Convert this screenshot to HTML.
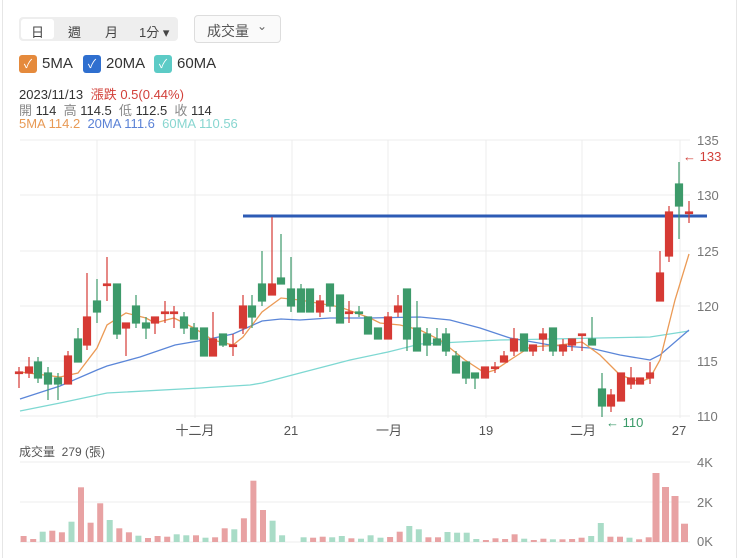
<!DOCTYPE html>
<html><head><meta charset="utf-8"><style>
html,body{margin:0;padding:0;background:#fff;width:740px;height:558px;overflow:hidden;font-family:"Liberation Sans","Noto Sans CJK TC",sans-serif;}
.abs{position:absolute;}
.seg{left:19px;top:17px;width:159px;height:24px;background:#eeeeee;border-radius:4px;}
.seg span{position:absolute;top:5px;font-size:13px;color:#444;}
.sel{left:2px;top:2px;width:33px;height:20px;background:#fff;border-radius:3px;}
.vbtn{left:194px;top:15px;width:85px;height:26px;border:1px solid #ddd;border-radius:4px;background:#fafafa;}
.cb{width:18px;height:18px;border-radius:3px;top:55px;color:#fff;font-size:12px;text-align:center;line-height:18px;}
.lbl{top:55px;font-size:15px;color:#333;}
.info{font-size:13px;left:19px;color:#333;}
</style></head><body>
<div class="abs" style="left:2px;top:0;width:1px;height:558px;background:#e6e6e6"></div>
<div class="abs" style="left:736px;top:0;width:1px;height:558px;background:#e6e6e6"></div>
<div class="abs seg"><div class="abs sel"></div><span style="left:12px">日</span><span style="left:49px">週</span><span style="left:86px">月</span><span style="left:120px">1分 ▾</span></div>
<div class="abs vbtn"><span class="abs" style="left:12px;top:5px;font-size:14px;color:#555">成交量</span><span class="abs" style="left:62px;top:3px;font-size:12px;color:#666">⌄</span></div>
<div class="abs cb" style="left:19px;background:#e58a3c">✓</div><div class="abs lbl" style="left:42px">5MA</div>
<div class="abs cb" style="left:83px;background:#2f6fcf">✓</div><div class="abs lbl" style="left:106px">20MA</div>
<div class="abs cb" style="left:154px;background:#5ccbc6">✓</div><div class="abs lbl" style="left:177px">60MA</div>
<div class="abs info" style="top:84px">2023/11/13 <span style="color:#d2403a;margin-left:4px">漲跌 0.5(0.44%)</span></div>
<div class="abs info" style="top:100px"><span style="color:#888">開</span> 114 &nbsp;<span style="color:#888">高</span> 114.5 &nbsp;<span style="color:#888">低</span> 112.5 &nbsp;<span style="color:#888">收</span> 114</div>
<div class="abs info" style="top:116px"><span style="color:#e89a55">5MA 114.2</span> &nbsp;<span style="color:#5b82d6">20MA 111.6</span> &nbsp;<span style="color:#88d6d0">60MA 110.56</span></div>

<svg class="abs" style="left:0;top:0" width="740" height="558">
<g stroke="#ececec" stroke-width="1">
<line x1="20" y1="140" x2="690" y2="140"/><line x1="20" y1="195" x2="690" y2="195"/><line x1="20" y1="251" x2="690" y2="251"/><line x1="20" y1="306" x2="690" y2="306"/><line x1="20" y1="361" x2="690" y2="361"/><line x1="20" y1="416" x2="690" y2="416"/>
<line x1="97" y1="140" x2="97" y2="418"/><line x1="195" y1="140" x2="195" y2="418"/><line x1="292" y1="140" x2="292" y2="418"/><line x1="388" y1="140" x2="388" y2="418"/><line x1="486" y1="140" x2="486" y2="418"/><line x1="582" y1="140" x2="582" y2="418"/><line x1="680" y1="140" x2="680" y2="418"/>
<line x1="20" y1="462" x2="690" y2="462"/><line x1="20" y1="502" x2="690" y2="502"/><line x1="20" y1="542" x2="690" y2="542"/>
</g>
<g font-size="13" fill="#777">
<text x="697" y="145">135</text><text x="697" y="200">130</text><text x="697" y="256">125</text><text x="697" y="311">120</text><text x="697" y="366">115</text><text x="697" y="421">110</text>
<text x="697" y="467">4K</text><text x="697" y="507">2K</text><text x="697" y="546">0K</text>
</g>
<g font-size="13" fill="#555" text-anchor="middle">
<text x="195" y="435">十二月</text><text x="291" y="435">21</text><text x="389" y="435">一月</text><text x="486" y="435">19</text><text x="583" y="435">二月</text><text x="679" y="435">27</text>
</g>
<text x="683" y="161" font-size="13" fill="#d2403a">← 133</text>
<text x="606" y="427" font-size="13" fill="#3a9a68">← 110</text>
<text x="19" y="456" font-size="12" fill="#555">成交量 &nbsp;279 (張)</text>

<g fill="none" stroke-width="1.3">
<polyline stroke="#7ed8d2" points="20,411 60,403 107,393 200,388 250,385 262,383 300,373 350,360 388,352 420,344 500,340 650,337 689,331"/>
<polyline stroke="#5b86d8" points="20,399 60,386 97,370 107,366 140,357 175,345 204,340 233,334 262,321 281,319 300,320 330,318 370,318 420,317 450,320 480,328 510,338 550,345 590,348 620,355 650,360 660,355 689,330"/>
<polyline stroke="#eb9a55" points="20,372 60,377 78,373 97,348 107,325 126,313 146,318 155,323 174,318 194,328 213,340 233,345 243,337 262,312 281,298 300,300 340,307 370,318 380,323 400,325 420,330 440,340 465,360 485,373 495,370 510,360 530,347 560,345 582,342 600,355 620,375 640,382 650,378 660,360 675,300 689,254"/>
</g>
<line x1="243" y1="216" x2="707" y2="216" stroke="#2d5bb5" stroke-width="3"/>

<g stroke="#d63a34" fill="#d63a34" stroke-width="1.2">
<line x1="19" y1="367" x2="19" y2="388"/><rect x="15.5" y="372" width="7" height="1.5"/>
<line x1="29" y1="357" x2="29" y2="378"/><rect x="25.5" y="367" width="7" height="6"/>
<line x1="68" y1="351" x2="68" y2="384"/><rect x="64.5" y="356" width="7" height="28"/>
<line x1="87" y1="273" x2="87" y2="350"/><rect x="83.5" y="317" width="7" height="28"/>
<line x1="107" y1="257" x2="107" y2="301"/><rect x="103.5" y="284" width="7" height="1.5"/>
<line x1="126" y1="323" x2="126" y2="356"/><rect x="122.5" y="323" width="7" height="5"/>
<line x1="155" y1="317" x2="155" y2="334"/><rect x="151.5" y="317" width="7" height="6"/>
<line x1="165" y1="301" x2="165" y2="323"/><rect x="161.5" y="312" width="7" height="1.5"/>
<line x1="174" y1="306" x2="174" y2="328"/><rect x="170.5" y="312" width="7" height="1.5"/>
<line x1="213" y1="312" x2="213" y2="356"/><rect x="209.5" y="339" width="7" height="17"/>
<line x1="233" y1="334" x2="233" y2="356"/><rect x="229.5" y="345" width="7" height="1.5"/>
<line x1="243" y1="295" x2="243" y2="334"/><rect x="239.5" y="306" width="7" height="22"/>
<line x1="272" y1="217" x2="272" y2="295"/><rect x="268.5" y="284" width="7" height="11"/>
<line x1="320" y1="295" x2="320" y2="317"/><rect x="316.5" y="301" width="7" height="11"/>
<line x1="349" y1="301" x2="349" y2="323"/><rect x="345.5" y="312" width="7" height="1.5"/>
<line x1="388" y1="312" x2="388" y2="339"/><rect x="384.5" y="317" width="7" height="22"/>
<line x1="398" y1="295" x2="398" y2="317"/><rect x="394.5" y="306" width="7" height="6"/>
<rect x="481.5" y="367" width="7" height="11"/>
<line x1="495" y1="362" x2="495" y2="373"/><rect x="491.5" y="367" width="7" height="1.5"/>
<line x1="504" y1="351" x2="504" y2="362"/><rect x="500.5" y="356" width="7" height="6"/>
<line x1="514" y1="328" x2="514" y2="356"/><rect x="510.5" y="339" width="7" height="12"/>
<line x1="533" y1="345" x2="533" y2="356"/><rect x="529.5" y="345" width="7" height="6"/>
<line x1="543" y1="328" x2="543" y2="351"/><rect x="539.5" y="334" width="7" height="5"/>
<line x1="563" y1="339" x2="563" y2="356"/><rect x="559.5" y="345" width="7" height="6"/>
<line x1="572" y1="339" x2="572" y2="351"/><rect x="568.5" y="339" width="7" height="6"/>
<line x1="582" y1="334" x2="582" y2="351"/><rect x="578.5" y="334" width="7" height="1.5"/>
<line x1="611" y1="389" x2="611" y2="412"/><rect x="607.5" y="395" width="7" height="11"/>
<rect x="617.5" y="373" width="7" height="28"/>
<line x1="631" y1="367" x2="631" y2="389"/><rect x="627.5" y="378" width="7" height="6"/>
<rect x="636.5" y="378" width="7" height="6"/>
<line x1="650" y1="362" x2="650" y2="384"/><rect x="646.5" y="373" width="7" height="5"/>
<line x1="660" y1="251" x2="660" y2="301"/><rect x="656.5" y="273" width="7" height="28"/>
<line x1="669" y1="206" x2="669" y2="262"/><rect x="665.5" y="212" width="7" height="44"/>
<line x1="689" y1="201" x2="689" y2="223"/><rect x="685.5" y="212" width="7" height="1.5"/>
</g>
<g stroke="#3d9a6a" fill="#3d9a6a" stroke-width="1.2">
<line x1="38" y1="357" x2="38" y2="383"/><rect x="34.5" y="362" width="7" height="16"/>
<line x1="48" y1="367" x2="48" y2="400"/><rect x="44.5" y="373" width="7" height="11"/>
<line x1="58" y1="373" x2="58" y2="400"/><rect x="54.5" y="378" width="7" height="6"/>
<line x1="78" y1="328" x2="78" y2="362"/><rect x="74.5" y="339" width="7" height="23"/>
<line x1="97" y1="279" x2="97" y2="323"/><rect x="93.5" y="301" width="7" height="11"/>
<line x1="117" y1="284" x2="117" y2="339"/><rect x="113.5" y="284" width="7" height="50"/>
<line x1="136" y1="295" x2="136" y2="328"/><rect x="132.5" y="306" width="7" height="17"/>
<line x1="146" y1="317" x2="146" y2="339"/><rect x="142.5" y="323" width="7" height="5"/>
<line x1="184" y1="312" x2="184" y2="334"/><rect x="180.5" y="317" width="7" height="11"/>
<line x1="194" y1="323" x2="194" y2="339"/><rect x="190.5" y="328" width="7" height="11"/>
<rect x="200.5" y="328" width="7" height="28"/>
<line x1="223" y1="334" x2="223" y2="347"/><rect x="219.5" y="334" width="7" height="11"/>
<line x1="252" y1="295" x2="252" y2="328"/><rect x="248.5" y="306" width="7" height="11"/>
<line x1="262" y1="251" x2="262" y2="306"/><rect x="258.5" y="284" width="7" height="17"/>
<line x1="281" y1="234" x2="281" y2="284"/><rect x="277.5" y="278" width="7" height="6"/>
<line x1="291" y1="257" x2="291" y2="312"/><rect x="287.5" y="289" width="7" height="17"/>
<line x1="301" y1="284" x2="301" y2="312"/><rect x="297.5" y="289" width="7" height="23"/>
<rect x="306.5" y="289" width="7" height="23"/>
<line x1="330" y1="284" x2="330" y2="312"/><rect x="326.5" y="284" width="7" height="22"/>
<rect x="336.5" y="295" width="7" height="28"/>
<line x1="359" y1="306" x2="359" y2="317"/><rect x="355.5" y="312" width="7" height="1.5"/>
<rect x="364.5" y="317" width="7" height="17"/>
<rect x="374.5" y="328" width="7" height="11"/>
<line x1="407" y1="289" x2="407" y2="351"/><rect x="403.5" y="289" width="7" height="50"/>
<line x1="417" y1="301" x2="417" y2="351"/><rect x="413.5" y="328" width="7" height="23"/>
<line x1="427" y1="328" x2="427" y2="356"/><rect x="423.5" y="334" width="7" height="11"/>
<line x1="437" y1="328" x2="437" y2="345"/><rect x="433.5" y="339" width="7" height="6"/>
<line x1="446" y1="328" x2="446" y2="356"/><rect x="442.5" y="334" width="7" height="17"/>
<line x1="456" y1="351" x2="456" y2="373"/><rect x="452.5" y="356" width="7" height="17"/>
<line x1="466" y1="362" x2="466" y2="384"/><rect x="462.5" y="362" width="7" height="16"/>
<line x1="475" y1="373" x2="475" y2="389"/><rect x="471.5" y="373" width="7" height="5"/>
<rect x="520.5" y="334" width="7" height="17"/>
<line x1="553" y1="328" x2="553" y2="356"/><rect x="549.5" y="328" width="7" height="23"/>
<line x1="592" y1="317" x2="592" y2="345"/><rect x="588.5" y="339" width="7" height="6"/>
<line x1="602" y1="373" x2="602" y2="417"/><rect x="598.5" y="389" width="7" height="17"/>
<line x1="679" y1="162" x2="679" y2="239"/><rect x="675.5" y="184" width="7" height="22"/>
</g>

<g fill="#e8a2a3">
<rect x="20.6" y="536" width="6" height="6"/><rect x="30.2" y="539" width="6" height="3"/><rect x="49.3" y="530.7" width="6" height="11.3"/><rect x="58.9" y="532.3" width="6" height="9.7"/><rect x="78.0" y="487.3" width="6" height="54.7"/><rect x="87.6" y="522.7" width="6" height="19.3"/><rect x="97.2" y="503.3" width="6" height="38.7"/><rect x="116.3" y="528.3" width="6" height="13.7"/><rect x="125.9" y="532.3" width="6" height="9.7"/><rect x="145.0" y="538" width="6" height="4"/><rect x="154.6" y="536" width="6" height="6"/><rect x="164.2" y="536.7" width="6" height="5.3"/><rect x="193.0" y="535.3" width="6" height="6.7"/><rect x="212.1" y="537.3" width="6" height="4.7"/><rect x="221.7" y="528.3" width="6" height="13.7"/><rect x="240.9" y="518.3" width="6" height="23.7"/><rect x="250.4" y="480.7" width="6" height="61.3"/><rect x="260.0" y="510" width="6" height="32"/><rect x="310.1" y="537.7" width="6" height="4.3"/><rect x="319.7" y="536.7" width="6" height="5.3"/><rect x="348.4" y="538.3" width="6" height="3.7"/><rect x="387.1" y="537" width="6" height="5"/><rect x="396.7" y="531.7" width="6" height="10.3"/><rect x="425.4" y="537.3" width="6" height="4.7"/><rect x="435.0" y="537.3" width="6" height="4.7"/><rect x="482.9" y="540" width="6" height="2"/><rect x="492.5" y="538.3" width="6" height="3.7"/><rect x="502.1" y="539" width="6" height="3"/><rect x="511.6" y="534.3" width="6" height="7.7"/><rect x="530.8" y="540" width="6" height="2"/><rect x="540.4" y="538.7" width="6" height="3.3"/><rect x="559.5" y="539.3" width="6" height="2.7"/><rect x="569.1" y="539" width="6" height="3"/><rect x="578.6" y="537.7" width="6" height="4.3"/><rect x="607.4" y="536.7" width="6" height="5.3"/><rect x="617.0" y="536.7" width="6" height="5.3"/><rect x="636.1" y="539.3" width="6" height="2.7"/><rect x="645.7" y="537.3" width="6" height="4.7"/><rect x="652.5" y="473" width="7" height="69"/><rect x="662" y="487" width="7" height="55"/><rect x="671.5" y="496" width="7" height="46"/><rect x="681" y="523.7" width="7" height="18.3"/>
</g>
<g fill="#a9dcc7">
<rect x="39.7" y="531.7" width="6" height="10.3"/><rect x="68.5" y="521.7" width="6" height="20.3"/><rect x="106.7" y="520" width="6" height="22"/><rect x="135.4" y="535.7" width="6" height="6.3"/><rect x="173.7" y="534.3" width="6" height="7.7"/><rect x="183.3" y="535.3" width="6" height="6.7"/><rect x="202.5" y="537.7" width="6" height="4.3"/><rect x="231.3" y="529.3" width="6" height="12.7"/><rect x="269.6" y="520.7" width="6" height="21.3"/><rect x="279.1" y="535.3" width="6" height="6.7"/><rect x="300.6" y="537.3" width="6" height="4.7"/><rect x="329.2" y="537.3" width="6" height="4.7"/><rect x="338.8" y="536" width="6" height="6"/><rect x="358.0" y="538.7" width="6" height="3.3"/><rect x="367.6" y="535.3" width="6" height="6.7"/><rect x="377.5" y="537.7" width="6" height="4.3"/><rect x="406.3" y="526" width="6" height="16"/><rect x="415.8" y="529.3" width="6" height="12.7"/><rect x="444.5" y="532" width="6" height="10"/><rect x="454.1" y="532.7" width="6" height="9.3"/><rect x="463.7" y="532.7" width="6" height="9.3"/><rect x="473.3" y="539" width="6" height="3"/><rect x="521.2" y="538.7" width="6" height="3.3"/><rect x="549.9" y="539.3" width="6" height="2.7"/><rect x="588.2" y="536" width="6" height="6"/><rect x="597.8" y="523" width="6" height="19"/><rect x="626.5" y="537.7" width="6" height="4.3"/>
</g>
</svg>
</body></html>
